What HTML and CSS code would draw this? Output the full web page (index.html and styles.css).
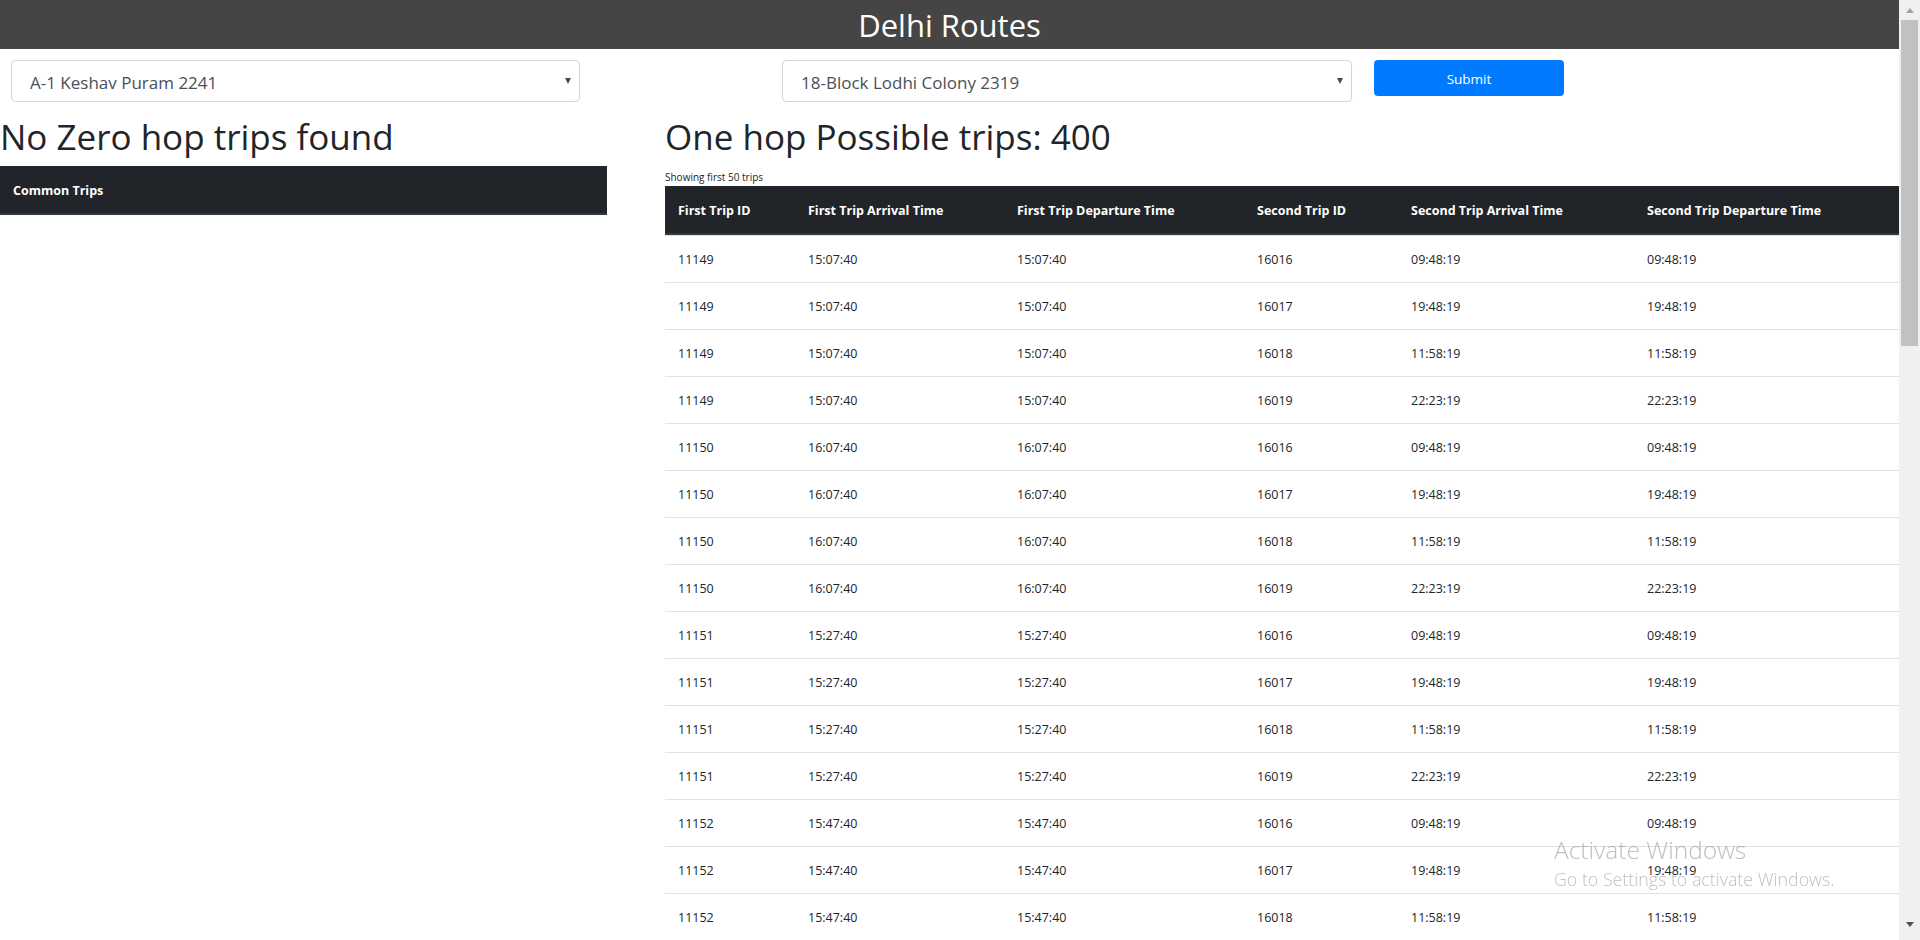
FILE: index.html
```html
<!DOCTYPE html>
<html lang="en">
<head>
<meta charset="utf-8">
<title>Delhi Routes</title>
<link rel="stylesheet" href="styles.css">
</head>
<body>
<div class="viewport">
  <div class="page">
    <header class="topbar"><h1 class="topbar-title">Delhi Routes</h1></header>

    <form class="route-form">
      <div class="select-box select-from">
        <select class="select-input"><option>A-1 Keshav Puram 2241</option></select>
        <span class="caret"></span>
      </div>
      <div class="select-box select-to">
        <select class="select-input"><option>18-Block Lodhi Colony 2319</option></select>
        <span class="caret"></span>
      </div>
      <button type="button" class="btn-submit">Submit</button>
    </form>

    <div class="results">
      <section class="zero-hop">
        <h2 class="result-title">No Zero hop trips found</h2>
        <table class="trip-table">
          <thead><tr><th>Common Trips</th></tr></thead>
        </table>
      </section>

      <section class="one-hop">
        <h2 class="result-title">One hop Possible trips: 400</h2>
        <p class="note">Showing first 50 trips</p>
        <table class="trip-table trips">
          <colgroup>
            <col class="c1"><col class="c2"><col class="c3"><col class="c4"><col class="c5"><col class="c6">
          </colgroup>
          <thead>
            <tr>
              <th>First Trip ID</th>
              <th>First Trip Arrival Time</th>
              <th>First Trip Departure Time</th>
              <th>Second Trip ID</th>
              <th>Second Trip Arrival Time</th>
              <th>Second Trip Departure Time</th>
            </tr>
          </thead>
          <tbody>
            <tr><td>11149</td><td>15:07:40</td><td>15:07:40</td><td>16016</td><td>09:48:19</td><td>09:48:19</td></tr>
            <tr><td>11149</td><td>15:07:40</td><td>15:07:40</td><td>16017</td><td>19:48:19</td><td>19:48:19</td></tr>
            <tr><td>11149</td><td>15:07:40</td><td>15:07:40</td><td>16018</td><td>11:58:19</td><td>11:58:19</td></tr>
            <tr><td>11149</td><td>15:07:40</td><td>15:07:40</td><td>16019</td><td>22:23:19</td><td>22:23:19</td></tr>
            <tr><td>11150</td><td>16:07:40</td><td>16:07:40</td><td>16016</td><td>09:48:19</td><td>09:48:19</td></tr>
            <tr><td>11150</td><td>16:07:40</td><td>16:07:40</td><td>16017</td><td>19:48:19</td><td>19:48:19</td></tr>
            <tr><td>11150</td><td>16:07:40</td><td>16:07:40</td><td>16018</td><td>11:58:19</td><td>11:58:19</td></tr>
            <tr><td>11150</td><td>16:07:40</td><td>16:07:40</td><td>16019</td><td>22:23:19</td><td>22:23:19</td></tr>
            <tr><td>11151</td><td>15:27:40</td><td>15:27:40</td><td>16016</td><td>09:48:19</td><td>09:48:19</td></tr>
            <tr><td>11151</td><td>15:27:40</td><td>15:27:40</td><td>16017</td><td>19:48:19</td><td>19:48:19</td></tr>
            <tr><td>11151</td><td>15:27:40</td><td>15:27:40</td><td>16018</td><td>11:58:19</td><td>11:58:19</td></tr>
            <tr><td>11151</td><td>15:27:40</td><td>15:27:40</td><td>16019</td><td>22:23:19</td><td>22:23:19</td></tr>
            <tr><td>11152</td><td>15:47:40</td><td>15:47:40</td><td>16016</td><td>09:48:19</td><td>09:48:19</td></tr>
            <tr><td>11152</td><td>15:47:40</td><td>15:47:40</td><td>16017</td><td>19:48:19</td><td>19:48:19</td></tr>
            <tr><td>11152</td><td>15:47:40</td><td>15:47:40</td><td>16018</td><td>11:58:19</td><td>11:58:19</td></tr>
            <tr><td>11152</td><td>15:47:40</td><td>15:47:40</td><td>16019</td><td>22:23:19</td><td>22:23:19</td></tr>
          </tbody>
        </table>
      </section>
    </div>
  </div>

  <div class="scrollbar" aria-hidden="true">
    <div class="sb-btn"><span class="sb-up"></span></div>
    <div class="sb-thumb"></div>
    <div class="sb-track"></div>
    <div class="sb-btn sb-btn-bottom"><span class="sb-down"></span></div>
  </div>
</div>

<div class="activate">
  <div class="activate-title">Activate Windows</div>
  <div class="activate-sub">Go to Settings to activate Windows.</div>
</div>
</body>
</html>
```

FILE: styles.css
```css
html, body {
  margin: 0;
  padding: 0;
  height: 100%;
  overflow: hidden;
}

body {
  font-family: "Open Sans", "Noto Sans", "DejaVu Sans", sans-serif;
  color: #212529;
  background: #fff;
}

.viewport {
  display: flex;
  height: 940px;
  width: 1920px;
  overflow: hidden;
}

.page {
  flex: 1;
  min-width: 0;
  overflow: hidden;
}

/* Top bar */
.topbar {
  background: #454545;
  height: 49px;
  display: flex;
  justify-content: center;
}

.topbar-title {
  margin: 0;
  padding-top: 1px;
  color: #fff;
  font-size: 31px;
  font-weight: 400;
  line-height: 48px;
}

/* Form row */
.route-form {
  display: flex;
  align-items: flex-start;
  margin: 11px 0 0;
  padding-left: 11px;
}

.select-box {
  display: flex;
  align-items: center;
  height: 42px;
  box-sizing: border-box;
  border: 1px solid #ced4da;
  border-radius: 4.4px;
  background: #fff;
}

.select-from { width: 569px; }
.select-to { width: 570px; margin-left: 202px; }

.select-input {
  flex: 1;
  min-width: 0;
  -webkit-appearance: none;
  appearance: none;
  border: 0;
  outline: 0;
  background: transparent;
  font-family: inherit;
  font-size: 17px;
  color: #495057;
  padding: 2px 0 0 18px;
  height: 40px;
}

.caret {
  width: 0;
  height: 0;
  border-left: 3.5px solid transparent;
  border-right: 3.5px solid transparent;
  border-top: 6px solid #4a4a4a;
  margin-right: 8px;
}

.btn-submit {
  width: 190px;
  height: 36px;
  margin-left: 22px;
  border: 0;
  border-radius: 4px;
  background: #007bff;
  color: #fff;
  font-family: inherit;
  font-size: 13.5px;
  padding: 1px 0 0;
}

/* Results */
.results {
  display: flex;
  align-items: flex-start;
  margin-top: 12px;
}

.zero-hop {
  width: 607px;
}

.one-hop {
  flex: 1;
  margin-left: 58px;
  min-width: 0;
}

.result-title {
  margin: 0 0 8px;
  padding-top: 2px;
  font-size: 35px;
  font-weight: 500;
  line-height: 42px;
}

.note {
  margin: 0 0 1px;
  padding-top: 4px;
  font-size: 10px;
  line-height: 15px;
}

.trip-table {
  width: 100%;
  border-collapse: separate;
  border-spacing: 0;
  font-size: 12.5px;
  line-height: 20px;
  table-layout: fixed;
}

.trip-table th {
  background: #212529;
  color: #fff;
  font-weight: 700;
  text-align: left;
  padding: 14px 13px 12px;
  border-top: 1px solid #212529;
  border-bottom: 2px solid #32383e;
}

.trip-table td {
  padding: 14px 13px 12px;
  border-top: 1px solid #dee2e6;
  white-space: nowrap;
}

.trips .c1 { width: 130px; }
.trips .c2 { width: 209px; }
.trips .c3 { width: 240px; }
.trips .c4 { width: 154px; }
.trips .c5 { width: 236px; }
.trips .c6 { width: 265px; }

/* Fake window scrollbar */
.scrollbar {
  width: 21px;
  flex: none;
  background: #f0f0f0;
  display: flex;
  flex-direction: column;
  align-items: center;
}

.sb-btn {
  height: 20px;
  width: 100%;
  display: flex;
  align-items: center;
  justify-content: center;
  flex: none;
}

.sb-btn-bottom {
  height: 24px;
  align-items: flex-start;
  padding-top: 6px;
  box-sizing: border-box;
}

.sb-up {
  width: 0;
  height: 0;
  border-left: 4.5px solid transparent;
  border-right: 4.5px solid transparent;
  border-bottom: 5px solid #a3a3a3;
}

.sb-down {
  width: 0;
  height: 0;
  border-left: 4.5px solid transparent;
  border-right: 4.5px solid transparent;
  border-top: 5px solid #505050;
}

.sb-thumb {
  width: 17px;
  height: 326px;
  background: #c1c1c1;
  flex: none;
}

.sb-track {
  flex: 1;
}

/* Windows activation watermark overlay */
.activate {
  position: fixed;
  left: 1554px;
  top: 834px;
  color: rgba(128, 128, 128, 0.5);
  font-family: "Open Sans", "Noto Sans", sans-serif;
  font-weight: 300;
  pointer-events: none;
  white-space: nowrap;
}

.activate-title {
  font-size: 24.5px;
  line-height: 32px;
}

.activate-sub {
  font-size: 17.8px;
  line-height: 27px;
}
```
